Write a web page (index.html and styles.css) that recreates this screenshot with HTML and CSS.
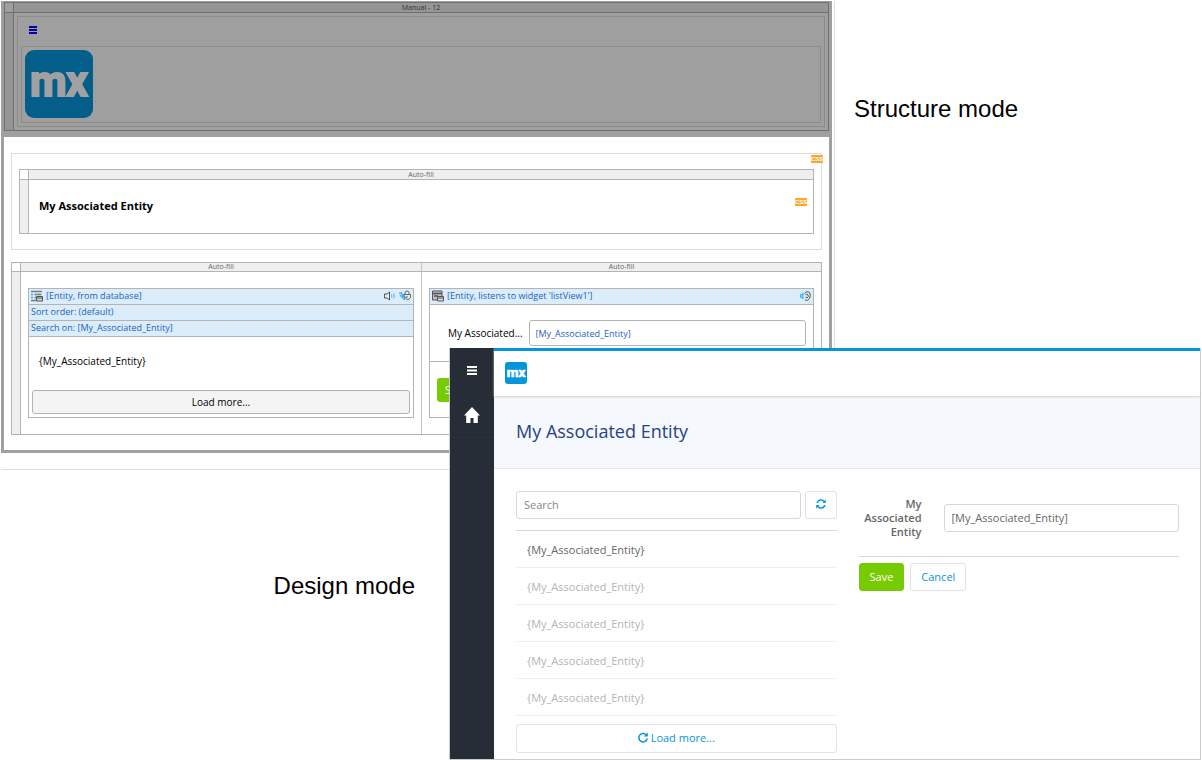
FILE: index.html
```html
<!DOCTYPE html>
<html lang="en">
<head>
<meta charset="utf-8">
<title>Structure mode and design mode</title>
<link rel="stylesheet" href="styles.css">
</head>
<body>
<svg class="defs" aria-hidden="true">
  <symbol id="logo" viewBox="0 0 68 68">
    <rect class="logo-tile" width="68" height="68" rx="9"/>
    <text class="logo-text" x="34" y="46" text-anchor="middle">mx</text>
  </symbol>
  <symbol id="bars" viewBox="0 0 10 9">
    <path d="M0 1h10M0 4.5h10M0 8h10" stroke="currentColor" stroke-width="2"/>
  </symbol>
</svg>
<main class="stage">
  <section class="structure" aria-label="Structure mode">
    <div class="frame">
      <div class="masthead">
        <div class="layout-grid layout-dark">
          <div class="corner"></div>
          <div class="col-head">Manual - 12</div>
          <div class="row-head"></div>
          <div class="cell cell-dark">
            <div class="box-dark">
              <a class="menu-link" href="#menu" aria-label="Menu"><svg width="8" height="8" viewBox="0 0 8 8"><path d="M0 1h8M0 4h8M0 7h8" stroke="currentColor" stroke-width="2"/></svg></a>
              <div class="logo-box"><svg class="logo-dim" width="68" height="68" role="img" aria-label="mx"><use href="#logo"/></svg></div>
            </div>
          </div>
        </div>
      </div>
      <div class="page">
        <div class="container">
          <span class="css-tag css-tag-outer">CSS</span>
          <div class="layout-grid">
            <div class="corner"></div>
            <div class="col-head">Auto-fill</div>
            <div class="row-head"></div>
            <div class="cell title-cell"><h2 class="s-title">My Associated Entity</h2><span class="css-tag">CSS</span></div>
          </div>
        </div>
        <div class="layout-grid two">
          <div class="corner"></div>
          <div class="col-head">Auto-fill</div>
          <div class="col-head split">Auto-fill</div>
          <div class="row-head"></div>
          <div class="cell">
            <div class="widget">
              <div class="bar">
                <svg width="12" height="12" viewBox="0 0 12 12" fill="none"><path d="M0 1.500h11M3.500 4.500h7M3.500 7.500h2M0 10.500h5" stroke="#747c83" stroke-width="1.500"/><path d="M0 4.500h2M0 7.500h2" stroke="#35a7e8" stroke-width="1.500"/><path d="M5.500 6.500h6v4.500h-6z" fill="#d6d6d6" stroke="#555"/><path d="M5.500 8h6" stroke="#555"/></svg>
                <span class="grow">[Entity, from database]</span>
                <svg width="12" height="10" viewBox="0 0 12 10" fill="none"><path d="M.5 3h2.500L5.500 1v8L3 7H.5z" stroke="#555"/><path d="M7.500 3.500q1 1.500 0 3M9.500 2.500q2 2.500 0 5" stroke="#4db4f0"/></svg>
                <svg width="12" height="11" viewBox="0 0 12 11" fill="none"><path d="M0 3.500 3 2.500M1 5l5 5M2.500 3.500 6 9" stroke="#4db4f0" stroke-width="1.500"/><path d="M4.500 4.500h7v3L9 10 6.500 8zM6 4.500V3q0-2 2-2t2 2v1.500M8 6v2" stroke="#666"/></svg>
              </div>
              <div class="bar">Sort order: (default)</div>
              <div class="bar">Search on: [My_Associated_Entity]</div>
              <div class="s-item">{My_Associated_Entity}</div>
              <button class="s-load" type="button">Load more...</button>
            </div>
          </div>
          <div class="cell split">
            <div class="widget">
              <div class="bar">
                <svg width="12" height="12" viewBox="0 0 12 12" fill="none"><path d="M.5 1h9.500v9H.5z" fill="#b9c3c9" stroke="#555"/><path d="M1 3.500h9M2 6h4" stroke="#555" stroke-width="1.500"/><path d="M5.500 6.500h6v4.500h-6z" fill="#ddd" stroke="#555"/><path d="M5.500 8h6" stroke="#555"/></svg>
                <span class="grow">[Entity, listens to widget 'listView1']</span>
                <svg width="12" height="10" viewBox="0 0 12 10" fill="none"><path d="M4.500 2Q2.500 5 4.500 8M2.500 3Q.5 5 2.500 7" stroke="#4db4f0" stroke-width="1.500"/><path d="M5.500 2.500Q7 .5 9 .7q2.500.5 2.300 4Q11 8 8.500 9.300L6 9M6.500 4Q8 2 9 4t-1 3L6.500 6" stroke="#555"/></svg>
              </div>
              <div class="s-field"><label for="s-entity">My Associated...</label><input id="s-entity" type="text" value="[My_Associated_Entity]"></div>
              <div class="s-footer"><button class="s-save" type="button">Save</button></div>
            </div>
          </div>
        </div>
      </div>
    </div>
  </section>
  <p class="caption caption-structure">Structure mode</p>
  <p class="caption caption-design">Design mode</p>
  <section class="design" aria-label="Design mode">
    <nav class="sidebar">
      <a class="side-link" href="#menu" aria-label="Menu"><svg width="10" height="9"><use href="#bars"/></svg></a>
      <a class="side-link side-home" href="#home" aria-label="Home"><svg width="16" height="16" viewBox="0 0 16 16"><path d="M8 0 0 8.500h2.200V16h4.300v-5h3v5h4.300V8.500H16z" fill="currentColor"/></svg></a>
    </nav>
    <div class="app">
      <header class="topbar"><svg width="22" height="22" role="img" aria-label="mx"><use href="#logo"/></svg></header>
      <div class="page-head"><h1>My Associated Entity</h1></div>
      <div class="content">
        <div>
          <div class="search">
            <input class="control" type="text" placeholder="Search" aria-label="Search">
            <button class="btn refresh" type="button" aria-label="Refresh"><svg width="10" height="10" viewBox="0 0 10 10" fill="none"><path d="M1 4A4.200 4.200 0 0 1 8.300 2.600M9 6A4.200 4.200 0 0 1 1.700 7.400" stroke="currentColor" stroke-width="1.500"/><path d="M9.800.5V4H6.300zM.2 9.500V6h3.500z" fill="currentColor"/></svg></button>
          </div>
          <ul class="list">
            <li>{My_Associated_Entity}</li>
            <li class="muted">{My_Associated_Entity}</li>
            <li class="muted">{My_Associated_Entity}</li>
            <li class="muted">{My_Associated_Entity}</li>
            <li class="muted">{My_Associated_Entity}</li>
          </ul>
          <button class="btn load" type="button"><svg width="10" height="11" viewBox="0 0 10 11" fill="none"><path d="M8.300 3A4.200 4.200 0 1 0 9.200 6.500" stroke="currentColor" stroke-width="1.500"/><path d="M9.800.5v4H5.800z" fill="currentColor"/></svg>Load more...</button>
        </div>
        <form class="form">
          <div class="field"><label for="entity">My Associated Entity</label><input class="control" id="entity" type="text" value="[My_Associated_Entity]"></div>
          <div class="actions"><button class="btn save" type="button">Save</button><button class="btn" type="button">Cancel</button></div>
        </form>
      </div>
    </div>
  </section>
</main>
</body>
</html>
```
FILE: styles.css
```css
*, *::before, *::after { box-sizing: border-box; }
body { margin: 0; background: #fff; font-family: "Open Sans", "Noto Sans", sans-serif; }
h1, h2, p, ul { margin: 0; padding: 0; }
svg { display: block; flex: none; }
button, input { font: inherit; margin: 0; min-width: 0; }
.defs { display: none; }
.logo-tile { fill: #0595db; }
.logo-text { fill: #fff; stroke: #fff; stroke-width: 2px; font: bold 42px "Roboto", sans-serif; }

.stage {
  display: grid;
  grid-template-columns: 448fr 386fr 366fr;
  grid-template-rows: 347px auto;
  padding: 1px 1px 0 1px;
}

/* Structure mode window */
.structure {
  grid-area: 1 / 1 / 3 / 3;
  align-self: start;
  padding: 0 2px 16px 0;
  border: solid #ddd;
  border-width: 0 1px 1px 0;
}
.frame { border: 3px solid #9f9f9f; border-top: 0; font-size: 9px; }
.masthead { background: #9f9f9f; padding: 1px 0 6px; }
.layout-grid {
  display: grid;
  grid-template-columns: 9px 1fr;
  grid-template-rows: 10px auto;
  border: 1px solid #b4b4b4;
  line-height: 9px;
}
.layout-grid.two { grid-template-columns: 9px 1fr 1fr; grid-template-rows: 9px auto; line-height: 8px; }
.corner { border: solid #b4b4b4; border-width: 0 1px 1px 0; }
.col-head {
  background: #efefef;
  border-bottom: 1px solid #b4b4b4;
  font-size: 7px;
  color: #666;
  text-align: center;
}
.row-head { background: #efefef; border-right: 1px solid #b4b4b4; }
.split { border-left: 1px solid #c4c4c4; }
.layout-dark, .layout-dark .corner, .layout-dark .col-head, .layout-dark .row-head { border-color: #707070; }
.layout-dark .col-head, .layout-dark .row-head { background: #959595; color: #333; }
.cell-dark { padding: 3px; }
.box-dark { border: 1px solid #8c8c8c; padding: 9px 3px 3px; }
.menu-link { display: block; width: 8px; margin: 0 0 12px 8px; color: #0000a8; }
.logo-box { border: 1px solid #8c8c8c; padding: 3px 3px 4px; }
.logo-dim { filter: brightness(0.63); }

.page { padding: 16px 7px 15px; }
.container { position: relative; border: 1px solid #ddd; padding: 15px 7px; margin-bottom: 12px; }
.css-tag {
  background: #ffa52c;
  color: #fff;
  font: bold 6px/8px "Liberation Sans", sans-serif;
  border-radius: 1px;
  width: 12px;
  height: 8px;
  text-align: center;
}
.css-tag-outer { position: absolute; top: 1px; right: -2px; }
.title-cell { display: flex; justify-content: space-between; align-items: center; height: 53px; padding: 0 6px 2px 10px; }
.title-cell .css-tag { align-self: flex-start; margin-top: 18px; }
.s-title { font-size: 11px; line-height: 16px; font-weight: 700; }

.two .cell { padding: 16px 7px; }
.widget { border: 1px solid #b4b4b4; height: 130px; }
.bar {
  display: flex;
  align-items: center;
  gap: 3px;
  height: 16px;
  padding: 0 2px 2px;
  background: #dbedfb;
  border-bottom: 1px solid #b4b4b4;
  color: #1c5fc0;
}
.grow { flex: 1; }
.s-item { padding: 17px 10px 22px; font-size: 10px; line-height: 14px; }
.s-load {
  display: block;
  width: calc(100% - 6px);
  margin: 0 3px;
  height: 24px;
  padding: 0;
  border: 1px solid #b4b4b4;
  border-radius: 3px;
  background: #f4f4f4;
  font-size: 10px;
}
.s-field { display: flex; align-items: center; gap: 6px; padding: 15px 7px 15px 18px; border-bottom: 1px solid #b4b4b4; font-size: 10px; }
.s-field label { white-space: nowrap; }
.s-field input { flex: 1; height: 26px; padding: 0 6px; border: 1px solid #b4b4b4; border-radius: 3px; color: #1c5fc0; font-size: 9px; background: #fff; }
.s-footer { padding: 16px 7px; }
.s-save { height: 24px; padding: 0 8px; border: 0; border-radius: 3px; background: #76cb02; color: #fff; font-size: 10px; }

/* Captions */
.caption { font: 24px/28px "Liberation Sans", Arial, sans-serif; white-space: nowrap; }
.caption-structure { grid-area: 1 / 3; padding: 94px 0 0 19px; }
.caption-design { grid-area: 2 / 1; justify-self: end; padding: 224px 34px 0 0; }

/* Design mode window */
.design {
  grid-area: 2 / 2 / 3 / 4;
  z-index: 1;
  display: flex;
  background: #fff;
  border: solid #ccc;
  border-width: 0 1px 1px 1px;
  font-size: 11px;
  color: #666;
}
.sidebar { width: 44px; background: #262d37; flex: none; }
.side-link { display: flex; align-items: center; justify-content: center; height: 44px; color: #fff; }
.side-home { height: 46px; border-bottom: 1px solid #2b323d; }
.app { flex: 1; min-width: 0; }
.topbar { position: relative; height: 48px; padding: 11px; border-top: 3px solid #0595db; background: #fff; box-shadow: 0 1px 2px #ccc; }
.page-head { padding: 21px 22px 23px; background: #f5f8fd; border-bottom: 1px solid #e4e6ea; }
.page-head h1 { font-size: 18px; line-height: 28px; font-weight: 400; color: #264289; }
.content { display: grid; grid-template-columns: 1fr 1fr; gap: 22px; padding: 22px 21px 6px 22px; }
.search { display: flex; gap: 4px; margin-bottom: 11px; }
.control { flex: 1; height: 28px; padding: 0 7px 2px; border: 1px solid #d7d7d7; border-radius: 3px; background: #fff; color: #666; }
.control::placeholder { color: #888; }
.btn {
  display: flex;
  align-items: center;
  justify-content: center;
  gap: 3px;
  height: 28px;
  padding: 0 10px 2px;
  border: 1px solid #e2e2e2;
  border-radius: 3px;
  background: #fff;
  color: #0595db;
}
.list { list-style: none; border-top: 1px solid #d7d7d7; margin-bottom: 8px; }
.list li { height: 37px; padding: 0 11px; line-height: 37px; border-bottom: 1px solid #eee; }
.list .muted { color: #b4b4b4; }
.load { width: 100%; height: 29px; }
.field { display: flex; align-items: center; gap: 22px; padding: 6px 0 17px; border-bottom: 1px solid #d7d7d7; }
.field label { width: 63px; font-weight: 600; line-height: 14px; text-align: right; }
.actions { display: flex; gap: 6px; padding-top: 6px; }
.save { background: #76cb02; border-color: #76cb02; color: #fff; }
```
